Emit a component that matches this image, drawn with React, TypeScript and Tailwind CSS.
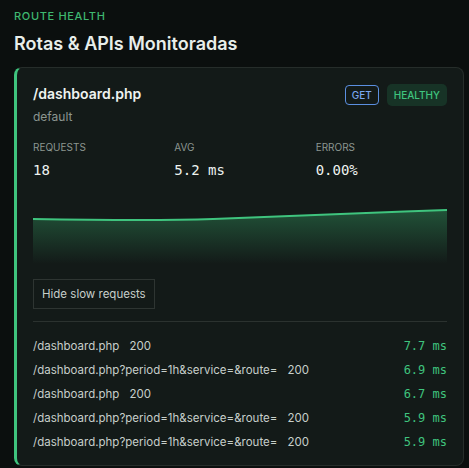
import React from 'react';

interface SlowRequest {
  path: string;
  status: number;
  ms: string;
}

const requests: SlowRequest[] = [
  { path: '/dashboard.php', status: 200, ms: '7.7 ms' },
  { path: '/dashboard.php?period=1h&service=&route=', status: 200, ms: '6.9 ms' },
  { path: '/dashboard.php', status: 200, ms: '6.7 ms' },
  { path: '/dashboard.php?period=1h&service=&route=', status: 200, ms: '5.9 ms' },
  { path: '/dashboard.php?period=1h&service=&route=', status: 200, ms: '5.9 ms' },
];

const stats = [
  { label: 'Requests', value: '18' },
  { label: 'Avg', value: '5.2 ms' },
  { label: 'Errors', value: '0.00%' },
];

const mono = { fontFamily: '"DejaVu Sans Mono", monospace' };

// Latency sparkline: a soft area under a single green line
const Sparkline: React.FC = () => (
  <svg viewBox="0 0 414 56" preserveAspectRatio="none" className="block w-full h-[56px]">
    <defs>
      <linearGradient id="latFill" x1="0" y1="0" x2="0" y2="1">
        <stop offset="0%" stopColor="#2f8a58" stopOpacity="0.5" />
        <stop offset="100%" stopColor="#2f8a58" stopOpacity="0" />
      </linearGradient>
    </defs>
    <path
      d="M0 11 C 60 12, 120 13, 180 11 S 330 5, 414 2 L 414 56 L 0 56 Z"
      fill="url(#latFill)"
    />
    <path
      d="M0 11 C 60 12, 120 13, 180 11 S 330 5, 414 2"
      fill="none"
      stroke="#3fc47e"
      strokeWidth="2"
    />
  </svg>
);

export default function App() {
  return (
    <div
      className="w-[469px] h-[468px] bg-[#0b0f0e] px-[14px] pt-[9px] overflow-hidden"
      style={{ fontFamily: 'Inter, "Noto Sans", sans-serif' }}
    >
      <div className="text-[11px] font-medium tracking-[0.06em] text-[#3fb870] leading-[14px]">ROUTE HEALTH</div>
      <h1 className="mt-[10px] text-[18px] font-semibold text-[#e8eeea] leading-[22px]">Rotas &amp; APIs Monitoradas</h1>

      <div className="mt-[12px] w-[450px] rounded-lg border border-[#262d2a] border-l-[3px] border-l-[#3fc47e] bg-[#131a18] pl-[16px] pr-[16px] pt-[16px] pb-[15px]">
        <div className="flex items-start justify-between">
          <div>
            <div className="text-[14px] font-semibold text-[#eef3f0] leading-[20px]">/dashboard.php</div>
            <div className="mt-[5px] text-[12px] text-[#8c9690] leading-[16px]">default</div>
          </div>
          <div className="flex items-center gap-2">
            <span className="rounded-[4px] border border-[#5b8fe0] px-[6px] py-[3px] text-[10px] font-medium text-[#7aa7f0] leading-[12px]">GET</span>
            <span className="rounded-[5px] bg-[#173326] px-[7px] py-[5px] text-[10px] font-medium text-[#3fc47e] leading-[12px]">HEALTHY</span>
          </div>
        </div>

        <div className="mt-[16px] grid grid-cols-3 gap-[10px]">
          {stats.map((s) => (
            <div key={s.label}>
              <div className="text-[10px] uppercase text-[#8c9690] leading-[12px]">{s.label}</div>
              <div className="mt-[9px] text-[14px] text-[#eef3f0] leading-[16px]" style={mono}>{s.value}</div>
            </div>
          ))}
        </div>

        <div className="mt-[30px]">
          <Sparkline />
        </div>

        <button
          type="button"
          className="mt-[15px] border border-[#2e3532] px-[8px] h-[30px] text-[11.5px] text-[#c7cfca] leading-[14px]"
        >
          Hide slow requests
        </button>

        <div className="mt-[12px] border-t border-[#2b322f]" />

        <div className="mt-[16px] flex flex-col gap-[8px]">
          {requests.map((r, i) => (
            <div key={i} className="flex items-center justify-between h-[16px]">
              <span className="text-[11.5px] text-[#c7cfca] leading-[16px]">
                {r.path}
                <span className="ml-[10px]">{r.status}</span>
              </span>
              <span className="text-[12px] text-[#3fc47e] leading-[16px]" style={mono}>{r.ms}</span>
            </div>
          ))}
        </div>
      </div>
    </div>
  );
}
